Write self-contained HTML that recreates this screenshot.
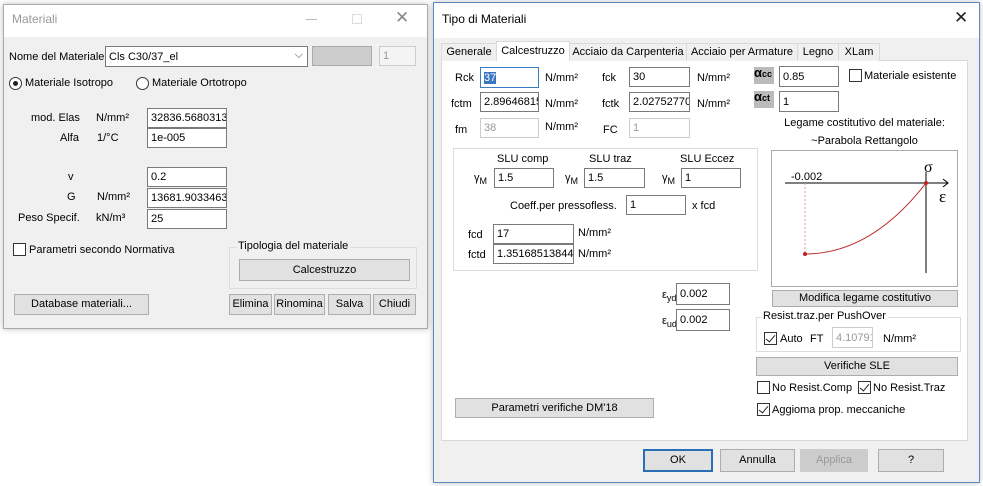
<!DOCTYPE html>
<html><head><meta charset="utf-8"><style>
*{box-sizing:border-box;margin:0;padding:0}
body{width:983px;height:486px;background:#fff;position:relative;overflow:hidden;font-family:"Liberation Sans",sans-serif;font-size:11px;color:#000}
.a{position:absolute;white-space:nowrap}
.win{position:absolute;background:#f0f0f0;border:1px solid #aaa;box-shadow:0 0 6px rgba(0,0,0,.25)}
.tb{position:absolute;left:0;right:0;top:0;background:#fff}
.in{position:absolute;background:#fff;border:1px solid #7a7a7a;padding:0 3px;font-size:11px;overflow:hidden;white-space:nowrap;display:flex;align-items:center}
.dis{color:#999;border-color:#ccc;background:#f0f0f0}
.btn{position:absolute;background:#e1e1e1;border:1px solid #adadad;text-align:center;font-size:11px}
.cb{position:absolute;width:13px;height:13px;border:1px solid #333;background:#fff}
.ck::after{content:"";position:absolute;left:3px;top:0px;width:4px;height:8px;border:solid #222;border-width:0 1.5px 1.5px 0;transform:rotate(40deg)}
.grp{position:absolute;border:1px solid #dcdcdc}
.tab{position:absolute;top:43px;height:18px;border:1px solid #d9d9d9;border-bottom:none;background:#f0f0f0;text-align:center;line-height:17px}
</style></head><body>

<!-- Left window -->
<div class="win" style="left:3px;top:4px;width:425px;height:325px">
 <div class="tb" style="height:32px"></div>
</div>
<div class="a" style="left:12px;top:12px;font-size:12px;color:#999">Materiali</div>
<div class="a" style="left:306px;top:19px;width:11px;border-top:1px solid #bbb"></div>
<div class="a" style="left:352px;top:14px;width:10px;height:10px;border:1px solid #ddd"></div>
<div class="a" style="left:395px;top:8px;font-size:17px;color:#888">✕</div>

<div class="a" style="left:9px;top:51px">Nome del Materiale</div>
<div class="in" style="left:105px;top:46px;width:203px;height:21px">Cls C30/37_el<span style="position:absolute;right:4px;top:2px;color:#444">⌵</span></div>
<div class="a" style="left:312px;top:46px;width:60px;height:20px;background:#ccc;border:1px solid #aaa"></div>
<div class="in dis" style="left:379px;top:46px;width:37px;height:20px;background:#f4f4f4">1</div>
<div class="a" style="left:9px;top:77px;width:13px;height:13px;border:1px solid #333;border-radius:50%;background:#fff"><div style="position:absolute;left:3px;top:3px;width:5px;height:5px;border-radius:50%;background:#222"></div></div>
<div class="a" style="left:25px;top:77px">Materiale Isotropo</div>
<div class="a" style="left:136px;top:77px;width:13px;height:13px;border:1px solid #333;border-radius:50%;background:#fff"></div>
<div class="a" style="left:152px;top:77px">Materiale Ortotropo</div>

<div class="a" style="left:31px;top:112px">mod. Elas</div><div class="a" style="left:96px;top:112px">N/mm²</div>
<div class="in" style="left:147px;top:108px;width:80px;height:20px">32836.5680313</div>
<div class="a" style="left:60px;top:132px">Alfa</div><div class="a" style="left:97px;top:132px">1/°C</div>
<div class="in" style="left:147px;top:128px;width:80px;height:20px">1e-005</div>
<div class="a" style="left:68px;top:171px">v</div>
<div class="in" style="left:147px;top:167px;width:80px;height:20px">0.2</div>
<div class="a" style="left:67px;top:191px">G</div><div class="a" style="left:97px;top:191px">N/mm²</div>
<div class="in" style="left:147px;top:188px;width:80px;height:20px">13681.9033463</div>
<div class="a" style="left:18px;top:212px">Peso Specif.</div><div class="a" style="left:96px;top:212px">kN/m³</div>
<div class="in" style="left:147px;top:209px;width:80px;height:20px">25</div>
<div class="cb" style="left:13px;top:243px"></div>
<div class="a" style="left:29px;top:244px">Parametri secondo Normativa</div>
<div class="grp" style="left:229px;top:247px;width:188px;height:42px"></div>
<div class="a" style="left:236px;top:240px;background:#f0f0f0;padding:0 2px">Tipologia del materiale</div>
<div class="btn" style="left:239px;top:259px;width:171px;height:22px;line-height:20px">Calcestruzzo</div>
<div class="btn" style="left:14px;top:294px;width:135px;height:21px;line-height:19px">Database materiali...</div>
<div class="btn" style="left:229px;top:294px;width:43px;height:21px;line-height:19px">Elimina</div>
<div class="btn" style="left:274px;top:294px;width:51px;height:21px;line-height:19px">Rinomina</div>
<div class="btn" style="left:328px;top:294px;width:43px;height:21px;line-height:19px">Salva</div>
<div class="btn" style="left:373px;top:294px;width:43px;height:21px;line-height:19px">Chiudi</div>

<!-- Right window -->
<div class="win" style="left:433px;top:2px;width:547px;height:481px;border-color:#5a8ac0">
 <div class="tb" style="height:35px"></div>
</div>
<div class="a" style="left:442px;top:12px;font-size:12px">Tipo di Materiali</div>
<div class="a" style="left:954px;top:8px;font-size:17px;color:#222">✕</div>

<div class="a" style="left:441px;top:60px;width:527px;height:381px;background:#fff;border:1px solid #d9d9d9"></div>
<div class="tab" style="left:441px;width:56px">Generale</div>
<div class="tab" style="left:496px;top:41px;height:20px;width:74px;background:#fff;line-height:18px">Calcestruzzo</div>
<div class="tab" style="left:569px;width:118px">Acciaio da Carpenteria</div>
<div class="tab" style="left:686px;width:112px">Acciaio per Armature</div>
<div class="tab" style="left:797px;width:42px">Legno</div>
<div class="tab" style="left:838px;width:42px">XLam</div>

<div class="a" style="left:455px;top:72px">Rck</div>
<div class="in" style="left:480px;top:67px;width:59px;height:21px;border-color:#3b7dc4"><span style="background:#3a76c0;color:#fff">37</span></div>
<div class="a" style="left:545px;top:72px">N/mm²</div>
<div class="a" style="left:602px;top:72px">fck</div>
<div class="in" style="left:629px;top:67px;width:61px;height:20px">30</div>
<div class="a" style="left:697px;top:72px">N/mm²</div>
<div class="a" style="left:754px;top:67px;width:20px;height:17px;background:#bbb;font-weight:bold;font-size:13px;line-height:12px">α<span style="font-size:9px">cc</span></div>
<div class="in" style="left:779px;top:66px;width:60px;height:21px">0.85</div>
<div class="cb" style="left:849px;top:69px"></div>
<div class="a" style="left:864px;top:70px">Materiale esistente</div>

<div class="a" style="left:451px;top:98px">fctm</div>
<div class="in" style="left:480px;top:92px;width:59px;height:20px">2.8964681526</div>
<div class="a" style="left:545px;top:98px">N/mm²</div>
<div class="a" style="left:602px;top:98px">fctk</div>
<div class="in" style="left:629px;top:92px;width:61px;height:20px">2.0275277068</div>
<div class="a" style="left:697px;top:98px">N/mm²</div>
<div class="a" style="left:754px;top:91px;width:20px;height:17px;background:#bbb;font-weight:bold;font-size:13px;line-height:12px">α<span style="font-size:9px">ct</span></div>
<div class="in" style="left:779px;top:91px;width:60px;height:21px">1</div>

<div class="a" style="left:455px;top:124px">fm</div>
<div class="in dis" style="left:480px;top:118px;width:59px;height:20px;background:#fff">38</div>
<div class="a" style="left:545px;top:121px">N/mm²</div>
<div class="a" style="left:603px;top:124px">FC</div>
<div class="in dis" style="left:629px;top:118px;width:61px;height:20px;background:#fff">1</div>
<div class="a" style="left:771px;top:117px;width:187px;text-align:center">Legame costitutivo del materiale:</div>
<div class="a" style="left:771px;top:135px;width:187px;text-align:center">~Parabola Rettangolo</div>

<div class="grp" style="left:453px;top:148px;width:305px;height:123px"></div>
<div class="a" style="left:497px;top:153px">SLU comp</div>
<div class="a" style="left:589px;top:153px">SLU traz</div>
<div class="a" style="left:680px;top:153px">SLU Eccez</div>
<div class="a" style="left:474px;top:172px">γ<sub style="font-size:9px">M</sub></div>
<div class="in" style="left:494px;top:168px;width:60px;height:20px">1.5</div>
<div class="a" style="left:565px;top:172px">γ<sub style="font-size:9px">M</sub></div>
<div class="in" style="left:584px;top:168px;width:61px;height:20px">1.5</div>
<div class="a" style="left:662px;top:172px">γ<sub style="font-size:9px">M</sub></div>
<div class="in" style="left:681px;top:168px;width:60px;height:20px">1</div>
<div class="a" style="left:510px;top:200px">Coeff.per pressofless.</div>
<div class="in" style="left:626px;top:195px;width:60px;height:20px">1</div>
<div class="a" style="left:692px;top:200px">x fcd</div>
<div class="a" style="left:468px;top:229px">fcd</div>
<div class="in" style="left:493px;top:224px;width:81px;height:20px">17</div>
<div class="a" style="left:578px;top:227px">N/mm²</div>
<div class="a" style="left:468px;top:249px">fctd</div>
<div class="in" style="left:493px;top:244px;width:81px;height:20px">1.35168513844</div>
<div class="a" style="left:578px;top:248px">N/mm²</div>

<svg class="a" style="left:771px;top:150px" width="187" height="137">
 <rect x="0.5" y="0.5" width="186" height="136" fill="#fff" stroke="#aaa"/>
 <line x1="14" y1="33" x2="177" y2="33" stroke="#000"/>
 <path d="M172 29 L177 33 L172 37" fill="none" stroke="#000"/>
 <line x1="155" y1="22" x2="155" y2="123" stroke="#000"/>
 <line x1="34" y1="33" x2="34" y2="104" stroke="#d99" stroke-dasharray="2,2"/>
 <path d="M34 104 Q100 104 155 33" fill="none" stroke="#b22"/>
 <circle cx="34" cy="104" r="2" fill="#b22"/><circle cx="155" cy="33" r="2" fill="#b22"/>
 <text x="20" y="30" font-size="11" font-family="Liberation Sans">-0.002</text>
 <text x="153" y="22" font-size="16" font-family="Liberation Serif">σ</text>
 <text x="168" y="52" font-size="17" font-family="Liberation Serif">ε</text>
</svg>
<div class="btn" style="left:772px;top:290px;width:186px;height:17px;line-height:15px">Modifica legame costitutivo</div>

<div class="a" style="left:662px;top:289px">ε<sub style="font-size:9px">yd</sub></div>
<div class="in" style="left:676px;top:283px;width:54px;height:22px">0.002</div>
<div class="a" style="left:662px;top:315px">ε<sub style="font-size:9px">ud</sub></div>
<div class="in" style="left:676px;top:309px;width:54px;height:22px">0.002</div>

<div class="grp" style="left:756px;top:317px;width:205px;height:35px"></div>
<div class="a" style="left:761px;top:310px;background:#fff;padding:0 2px">Resist.traz.per PushOver</div>
<div class="cb ck" style="left:764px;top:332px"></div>
<div class="a" style="left:780px;top:333px">Auto</div>
<div class="a" style="left:810px;top:333px">FT</div>
<div class="in dis" style="left:832px;top:327px;width:41px;height:21px;background:#fff">4.10791918</div>
<div class="a" style="left:883px;top:333px">N/mm²</div>
<div class="btn" style="left:756px;top:357px;width:202px;height:19px;line-height:17px">Verifiche SLE</div>
<div class="cb" style="left:757px;top:381px"></div>
<div class="a" style="left:772px;top:382px">No Resist.Comp</div>
<div class="cb ck" style="left:858px;top:381px"></div>
<div class="a" style="left:873px;top:382px">No Resist.Traz</div>
<div class="cb ck" style="left:757px;top:403px"></div>
<div class="a" style="left:772px;top:404px">Aggioma prop. meccaniche</div>
<div class="btn" style="left:455px;top:398px;width:199px;height:20px;line-height:18px">Parametri verifiche DM'18</div>

<div class="btn" style="left:643px;top:449px;width:70px;height:23px;line-height:19px;border:2px solid #2a6fb5">OK</div>
<div class="btn" style="left:720px;top:449px;width:75px;height:23px;line-height:21px">Annulla</div>
<div class="btn" style="left:800px;top:449px;width:68px;height:23px;line-height:21px;color:#999;border-color:#ccc;background:#ccc">Applica</div>
<div class="btn" style="left:878px;top:449px;width:66px;height:23px;line-height:21px">?</div>
</body></html>
